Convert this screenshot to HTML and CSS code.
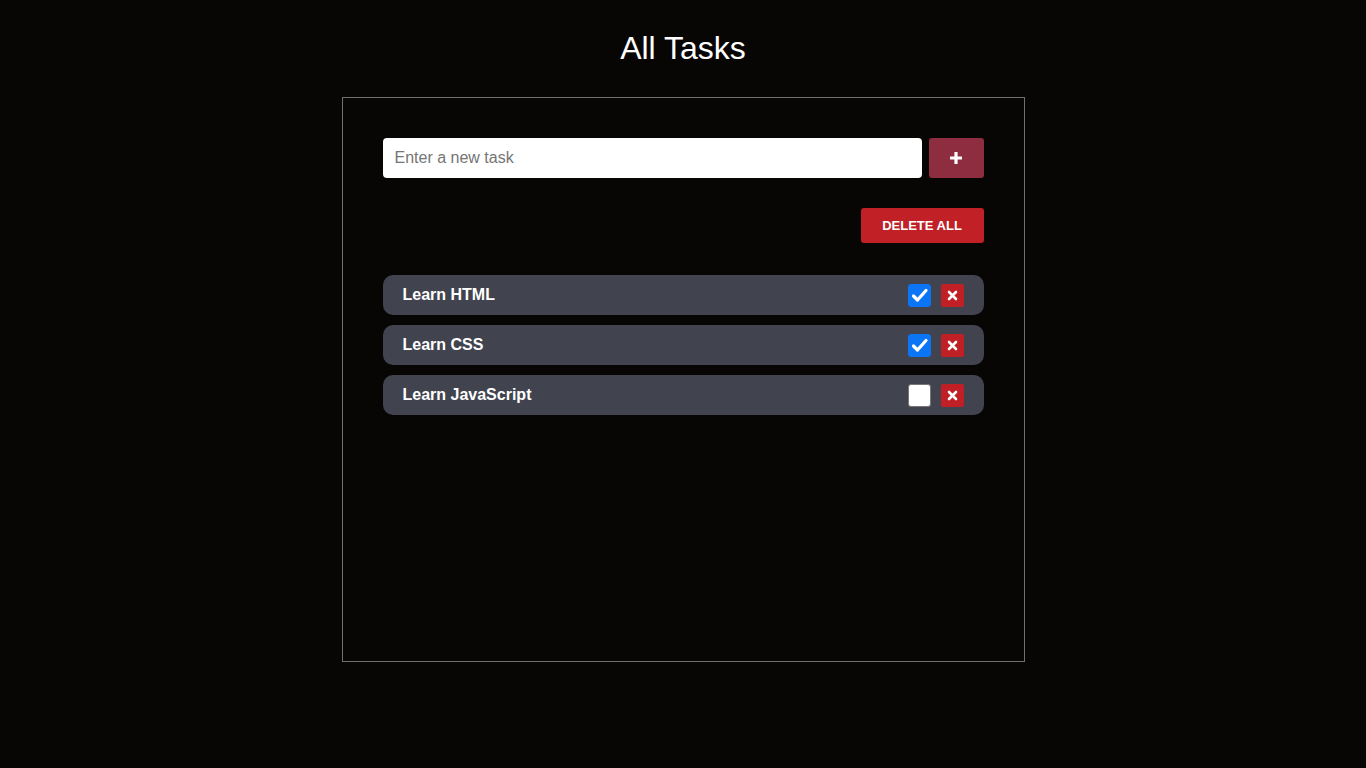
FILE: index.html
```html
<!DOCTYPE html>
<html lang="en">
<head>
<meta charset="utf-8">
<title>All Tasks</title>
<link rel="stylesheet" href="styles.css">
</head>
<body>
<h1 class="title">All Tasks</h1>
<main class="panel">
  <form class="add-row">
    <input class="task-input" type="text" placeholder="Enter a new task">
    <button class="add-btn" type="button" aria-label="Add">
      <svg width="16" height="16" viewBox="0 0 16 16"><path d="M8 2v12M2 8h12" stroke="#fff" stroke-width="3.2" stroke-linecap="butt"/></svg>
    </button>
  </form>
  <div class="actions">
    <button class="delete-all" type="button">DELETE ALL</button>
  </div>
  <ul class="tasks">
    <li class="task">
      <span class="task-name">Learn HTML</span>
      <span class="controls">
        <span class="check checked"><svg width="19" height="19" viewBox="0 0 19 19"><path d="M3.5 10l4 4L16 4.5" fill="none" stroke="#fff" stroke-width="3.2" stroke-linecap="round" stroke-linejoin="round"/></svg></span>
        <span class="remove"><svg width="11" height="11" viewBox="0 0 11 11"><path d="M2 2l7 7M9 2l-7 7" stroke="#fff" stroke-width="2.6" stroke-linecap="round"/></svg></span>
      </span>
    </li>
    <li class="task">
      <span class="task-name">Learn CSS</span>
      <span class="controls">
        <span class="check checked"><svg width="19" height="19" viewBox="0 0 19 19"><path d="M3.5 10l4 4L16 4.5" fill="none" stroke="#fff" stroke-width="3.2" stroke-linecap="round" stroke-linejoin="round"/></svg></span>
        <span class="remove"><svg width="11" height="11" viewBox="0 0 11 11"><path d="M2 2l7 7M9 2l-7 7" stroke="#fff" stroke-width="2.6" stroke-linecap="round"/></svg></span>
      </span>
    </li>
    <li class="task">
      <span class="task-name">Learn JavaScript</span>
      <span class="controls">
        <span class="check"></span>
        <span class="remove"><svg width="11" height="11" viewBox="0 0 11 11"><path d="M2 2l7 7M9 2l-7 7" stroke="#fff" stroke-width="2.6" stroke-linecap="round"/></svg></span>
      </span>
    </li>
  </ul>
</main>
</body>
</html>
```
FILE: styles.css
```css
* { box-sizing: border-box; }
html, body {
  margin: 0;
  background: #070605;
  font-family: "Liberation Sans", Arial, sans-serif;
  color: #fff;
}
.title {
  margin: 30px 0 30px;
  text-align: center;
  font-size: 32px;
  font-weight: normal;
  line-height: 37px;
}
.panel {
  width: 683px;
  height: 565px;
  margin: 0 auto;
  padding: 40px;
  border: 1px solid #6f6f6f;
}
.add-row {
  display: flex;
  gap: 7px;
  margin: 0;
}
.task-input {
  flex: 1;
  height: 40px;
  border: none;
  border-radius: 4px;
  padding: 0 12px;
  font-family: "Liberation Sans", Arial, sans-serif;
  font-size: 16px;
  color: #222;
  background: #fff;
  outline: none;
}
.task-input::placeholder { color: #757575; }
.add-btn {
  width: 55px;
  height: 40px;
  border: none;
  border-radius: 3px;
  background: #8f2d40;
  display: flex;
  align-items: center;
  justify-content: center;
  padding: 0;
}
.actions {
  display: flex;
  justify-content: flex-end;
  margin-top: 30px;
}
.delete-all {
  width: 123px;
  height: 35px;
  border: none;
  border-radius: 3px;
  background: #c02026;
  color: #fff;
  font-family: "Liberation Sans", Arial, sans-serif;
  font-size: 13px;
  font-weight: bold;
  padding: 0;
}
.tasks {
  list-style: none;
  margin: 32px 0 0;
  padding: 0;
  display: flex;
  flex-direction: column;
  gap: 10px;
}
.task {
  height: 40px;
  background: #41434f;
  border-radius: 10px;
  display: flex;
  align-items: center;
  justify-content: space-between;
  padding: 0 20px 0 20px;
}
.task-name {
  font-size: 16px;
  font-weight: bold;
  margin-top: -1px;
}
.controls {
  display: flex;
  gap: 10px;
  align-items: center;
}
.check {
  width: 23px;
  height: 23px;
  border-radius: 3px;
  background: #fff;
  border: 1px solid #767676;
  display: flex;
  align-items: center;
  justify-content: center;
}
.check.checked {
  background: #0b75f6;
  border-color: #0b75f6;
}
.remove {
  width: 23px;
  height: 23px;
  background: #bf1f25;
  border-radius: 2px;
  display: flex;
  align-items: center;
  justify-content: center;
}
```
